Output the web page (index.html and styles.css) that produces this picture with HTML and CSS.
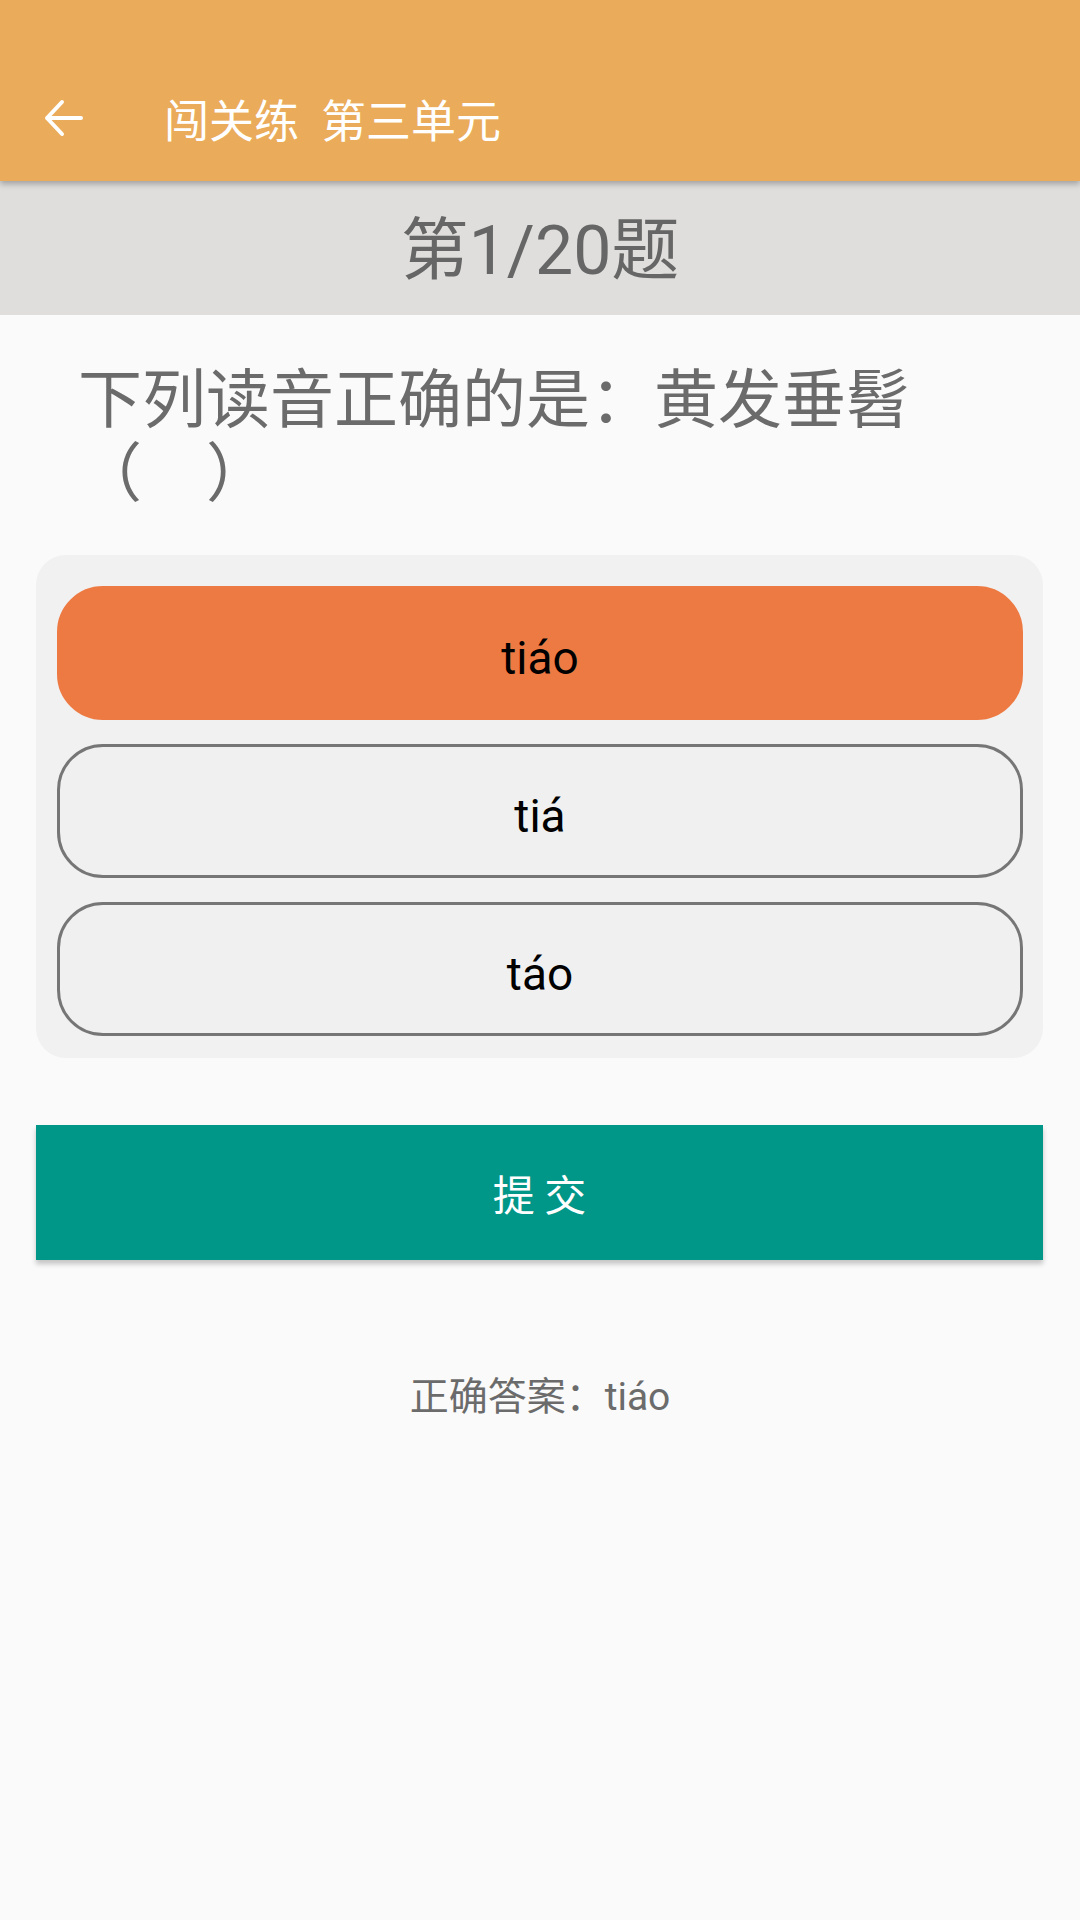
FILE: index.html
```html
<!DOCTYPE html>
<html lang="zh-CN">
<head>
<meta charset="utf-8">
<title>闯关练 第三单元</title>
<link rel="stylesheet" href="styles.css">
</head>
<body>
<div class="screen">
  <header class="appbar">
    <svg class="back" width="44" height="44" viewBox="0 0 44 44" aria-hidden="true">
      <path d="M40 22H6M21 6L6 22l15 16" fill="none" stroke="#ffffff" stroke-width="4" stroke-linecap="round" stroke-linejoin="round"/>
    </svg>
    <div class="title"><span>闯关练</span><span>第三单元</span></div>
  </header>
  <div class="progress">第1/20题</div>
  <div class="question">下列读音正确的是：黄发垂髫（　）</div>
  <div class="options">
    <div class="option selected">tiáo</div>
    <div class="option">tiá</div>
    <div class="option">táo</div>
  </div>
  <button class="submit">提 交</button>
  <div class="answer">正确答案：tiáo</div>
</div>
</body>
</html>
```

FILE: styles.css
```css
html, body {
  margin: 0;
  padding: 0;
  background: #fafafa;
}

.screen {
  width: 1080px;
  min-height: 1920px;
  background: #fafafa;
  font-family: Roboto, "Noto Sans CJK SC", sans-serif;
  display: flex;
  flex-direction: column;
}

.appbar {
  height: 181px;
  box-sizing: border-box;
  padding-top: 55px;
  background: #eaac5a;
  display: flex;
  align-items: center;
  box-shadow: 0 3px 6px rgba(0, 0, 0, 0.28);
  position: relative;
  z-index: 2;
}

.back {
  margin-left: 41px;
  flex: none;
}

.title {
  margin-left: 79px;
  display: flex;
  gap: 22px;
  color: #ffffff;
  font-family: "Noto Sans CJK SC", sans-serif;
  font-size: 45px;
  line-height: 1;
}

.progress {
  height: 134px;
  background: #dfdedc;
  color: #666666;
  font-size: 68px;
  display: flex;
  align-items: center;
  justify-content: center;
  line-height: 1;
  padding-top: 6px;
  box-sizing: border-box;
}

.question {
  margin: 42px 0 0 78px;
  width: 870px;
  color: #6b6b6b;
  font-family: "Noto Sans CJK SC", sans-serif;
  font-size: 64px;
  line-height: 74px;
}

.options {
  margin: 50px 37px 0 36px;
  padding: 31px 20px 22px 21px;
  background: #f1f1f1;
  border-radius: 30px;
  display: flex;
  flex-direction: column;
  gap: 24px;
}

.option {
  height: 134px;
  box-sizing: border-box;
  border: 3px solid #767676;
  border-radius: 46px;
  background: #f0f0f0;
  display: flex;
  align-items: center;
  justify-content: center;
  padding-top: 9px;
  color: #000000;
  font-family: Roboto, sans-serif;
  font-size: 46px;
}

.option.selected {
  background: #ee7a43;
  border-color: #ee7a43;
}

.submit {
  margin: 67px 37px 0 36px;
  height: 135px;
  border: none;
  border-radius: 0;
  background: #009688;
  color: #ffffff;
  font-family: "Noto Sans CJK SC", sans-serif;
  font-size: 42px;
  letter-spacing: 0;
  padding: 0;
  box-shadow: 0 4px 5px rgba(0, 0, 0, 0.22);
}

.answer {
  margin-top: 112px;
  text-align: center;
  color: #6b6b6b;
  font-size: 39px;
  line-height: 50px;
}
```
